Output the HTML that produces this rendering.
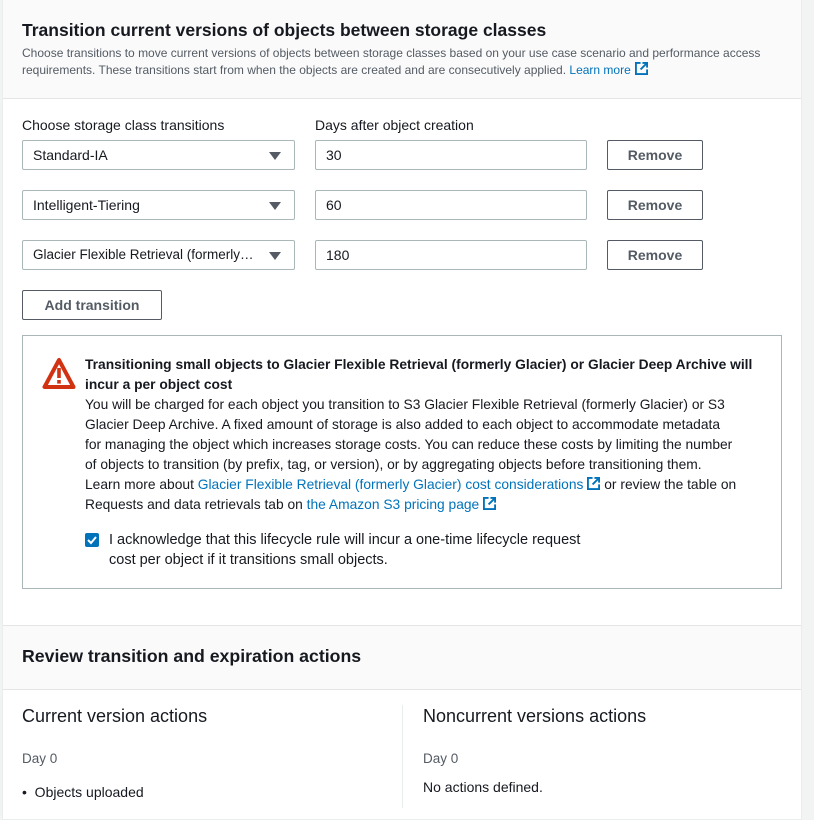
<!DOCTYPE html>
<html><head><meta charset="utf-8"><style>
*{box-sizing:border-box;margin:0;padding:0}
body{width:814px;height:808px;overflow:hidden;background:#f2f3f3;font-family:"Liberation Sans",sans-serif;color:#16191f;position:relative}
.panel{position:absolute;left:2px;top:0;width:800px;height:820px;background:#fff;border:1px solid #eaeded;border-top:none}
.a{position:absolute;white-space:nowrap}
.hdr{position:absolute;left:0;top:0;width:798px;height:99px;background:#fafafa;border-bottom:1px solid #e4e6e6}
.hdr2{position:absolute;left:0;top:625px;width:798px;height:65px;background:#fafafa;border-top:1px solid #e4e6e6;border-bottom:1px solid #e4e6e6}
.sel,.inp{position:absolute;height:30px;border:1px solid #aab7b8;border-radius:2px;font-size:14px;padding:6px 10px;background:#fff}
.sel:after{content:"";position:absolute;right:13px;top:11px;border-left:6px solid transparent;border-right:6px solid transparent;border-top:8px solid #545b64}
.btn{position:absolute;height:30px;border:1px solid #545b64;border-radius:2px;font-size:14px;font-weight:bold;color:#545b64;text-align:center;line-height:28px;background:#fff}
a{color:#0073bb;text-decoration:none}
.ext{display:inline-block;width:13px;height:13px;vertical-align:-1px;margin-left:4px}
.alert{position:absolute;left:22px;top:335px;width:760px;height:254px;border:1px solid #aab7b8}
.at{font-size:14px;line-height:20px}
</style></head><body>
<div class="panel">
<div class="hdr"></div>
<div class="hdr2"></div>
</div>
<div class="a" style="left:22px;top:20px;font-size:17.5px;font-weight:bold">Transition current versions of objects between storage classes</div>
<div class="a" style="left:22px;top:45px;font-size:12px;color:#545b64;line-height:17px">Choose transitions to move current versions of objects between storage classes based on your use case scenario and performance access<br>requirements. These transitions start from when the objects are created and are consecutively applied. <a href="#">Learn more</a><svg class="ext" viewBox="0 0 14 14"><path d="M6 1H1v12h12V8" fill="none" stroke="#0073bb" stroke-width="2"/><path d="M8 1h5v5M13 1L6 8" fill="none" stroke="#0073bb" stroke-width="2"/></svg></div>
<div class="a" style="left:22px;top:117px;font-size:14px">Choose storage class transitions</div>
<div class="a" style="left:315px;top:117px;font-size:14px">Days after object creation</div>

<div class="sel" style="left:22px;top:140px;width:273px">Standard-IA</div>
<div class="inp" style="left:315px;top:140px;width:272px">30</div>
<div class="btn" style="left:607px;top:140px;width:96px">Remove</div>
<div class="sel" style="left:22px;top:190px;width:273px">Intelligent-Tiering</div>
<div class="inp" style="left:315px;top:190px;width:272px">60</div>
<div class="btn" style="left:607px;top:190px;width:96px">Remove</div>
<div class="sel" style="left:22px;top:240px;width:273px;font-size:13.5px">Glacier Flexible Retrieval (formerly…</div>
<div class="inp" style="left:315px;top:240px;width:272px">180</div>
<div class="btn" style="left:607px;top:240px;width:96px">Remove</div>
<div class="btn" style="left:22px;top:290px;width:140px">Add transition</div>

<div class="alert"></div>
<svg class="a" style="left:42px;top:357px" width="34" height="33" viewBox="0 0 34 33"><path d="M17 3L2.5 30h29z" fill="none" stroke="#d13212" stroke-width="4" stroke-linejoin="round"/><rect x="15.2" y="11" width="3.6" height="10" fill="#d13212"/><rect x="15.2" y="23" width="3.6" height="3.6" fill="#d13212"/></svg>
<div class="a at" style="left:85px;top:355px;font-size:13.8px"><b>Transitioning small objects to Glacier Flexible Retrieval (formerly Glacier) or Glacier Deep Archive will<br>incur a per object cost</b><br>You will be charged for each object you transition to S3 Glacier Flexible Retrieval (formerly Glacier) or S3<br>Glacier Deep Archive. A fixed amount of storage is also added to each object to accommodate metadata<br>for managing the object which increases storage costs. You can reduce these costs by limiting the number<br>of objects to transition (by prefix, tag, or version), or by aggregating objects before transitioning them.<br>Learn more about <a href="#">Glacier Flexible Retrieval (formerly Glacier) cost considerations</a><svg class="ext" viewBox="0 0 14 14"><path d="M6 1H1v12h12V8" fill="none" stroke="#0073bb" stroke-width="2"/><path d="M8 1h5v5M13 1L6 8" fill="none" stroke="#0073bb" stroke-width="2"/></svg> or review the table on<br>Requests and data retrievals tab on <a href="#">the Amazon S3 pricing page</a><svg class="ext" viewBox="0 0 14 14"><path d="M6 1H1v12h12V8" fill="none" stroke="#0073bb" stroke-width="2"/><path d="M8 1h5v5M13 1L6 8" fill="none" stroke="#0073bb" stroke-width="2"/></svg></div>
<svg class="a" style="left:85px;top:533px" width="14" height="14" viewBox="0 0 14 14"><rect width="14" height="14" rx="2" fill="#0073bb"/><path d="M3 7l3 3 5-6" fill="none" stroke="#fff" stroke-width="2"/></svg>
<div class="a at" style="left:109px;top:530px;font-size:14.5px">I acknowledge that this lifecycle rule will incur a one-time lifecycle request<br>cost per object if it transitions small objects.</div>

<div class="a" style="left:22px;top:646px;font-size:17.7px;font-weight:bold">Review transition and expiration actions</div>
<div class="a" style="left:22px;top:706px;font-size:18px">Current version actions</div>
<div class="a" style="left:423px;top:706px;font-size:18px">Noncurrent versions actions</div>
<div class="a" style="left:402px;top:705px;width:1px;height:103px;background:#eaeded"></div>
<div class="a" style="left:22px;top:751px;font-size:13.5px;color:#545b64">Day 0</div>
<div class="a" style="left:423px;top:751px;font-size:13.5px;color:#545b64">Day 0</div>
<div class="a" style="left:22px;top:784px;font-size:14px">•&nbsp;&nbsp;Objects uploaded</div>
<div class="a" style="left:423px;top:779px;font-size:14px">No actions defined.</div>
</body></html>
